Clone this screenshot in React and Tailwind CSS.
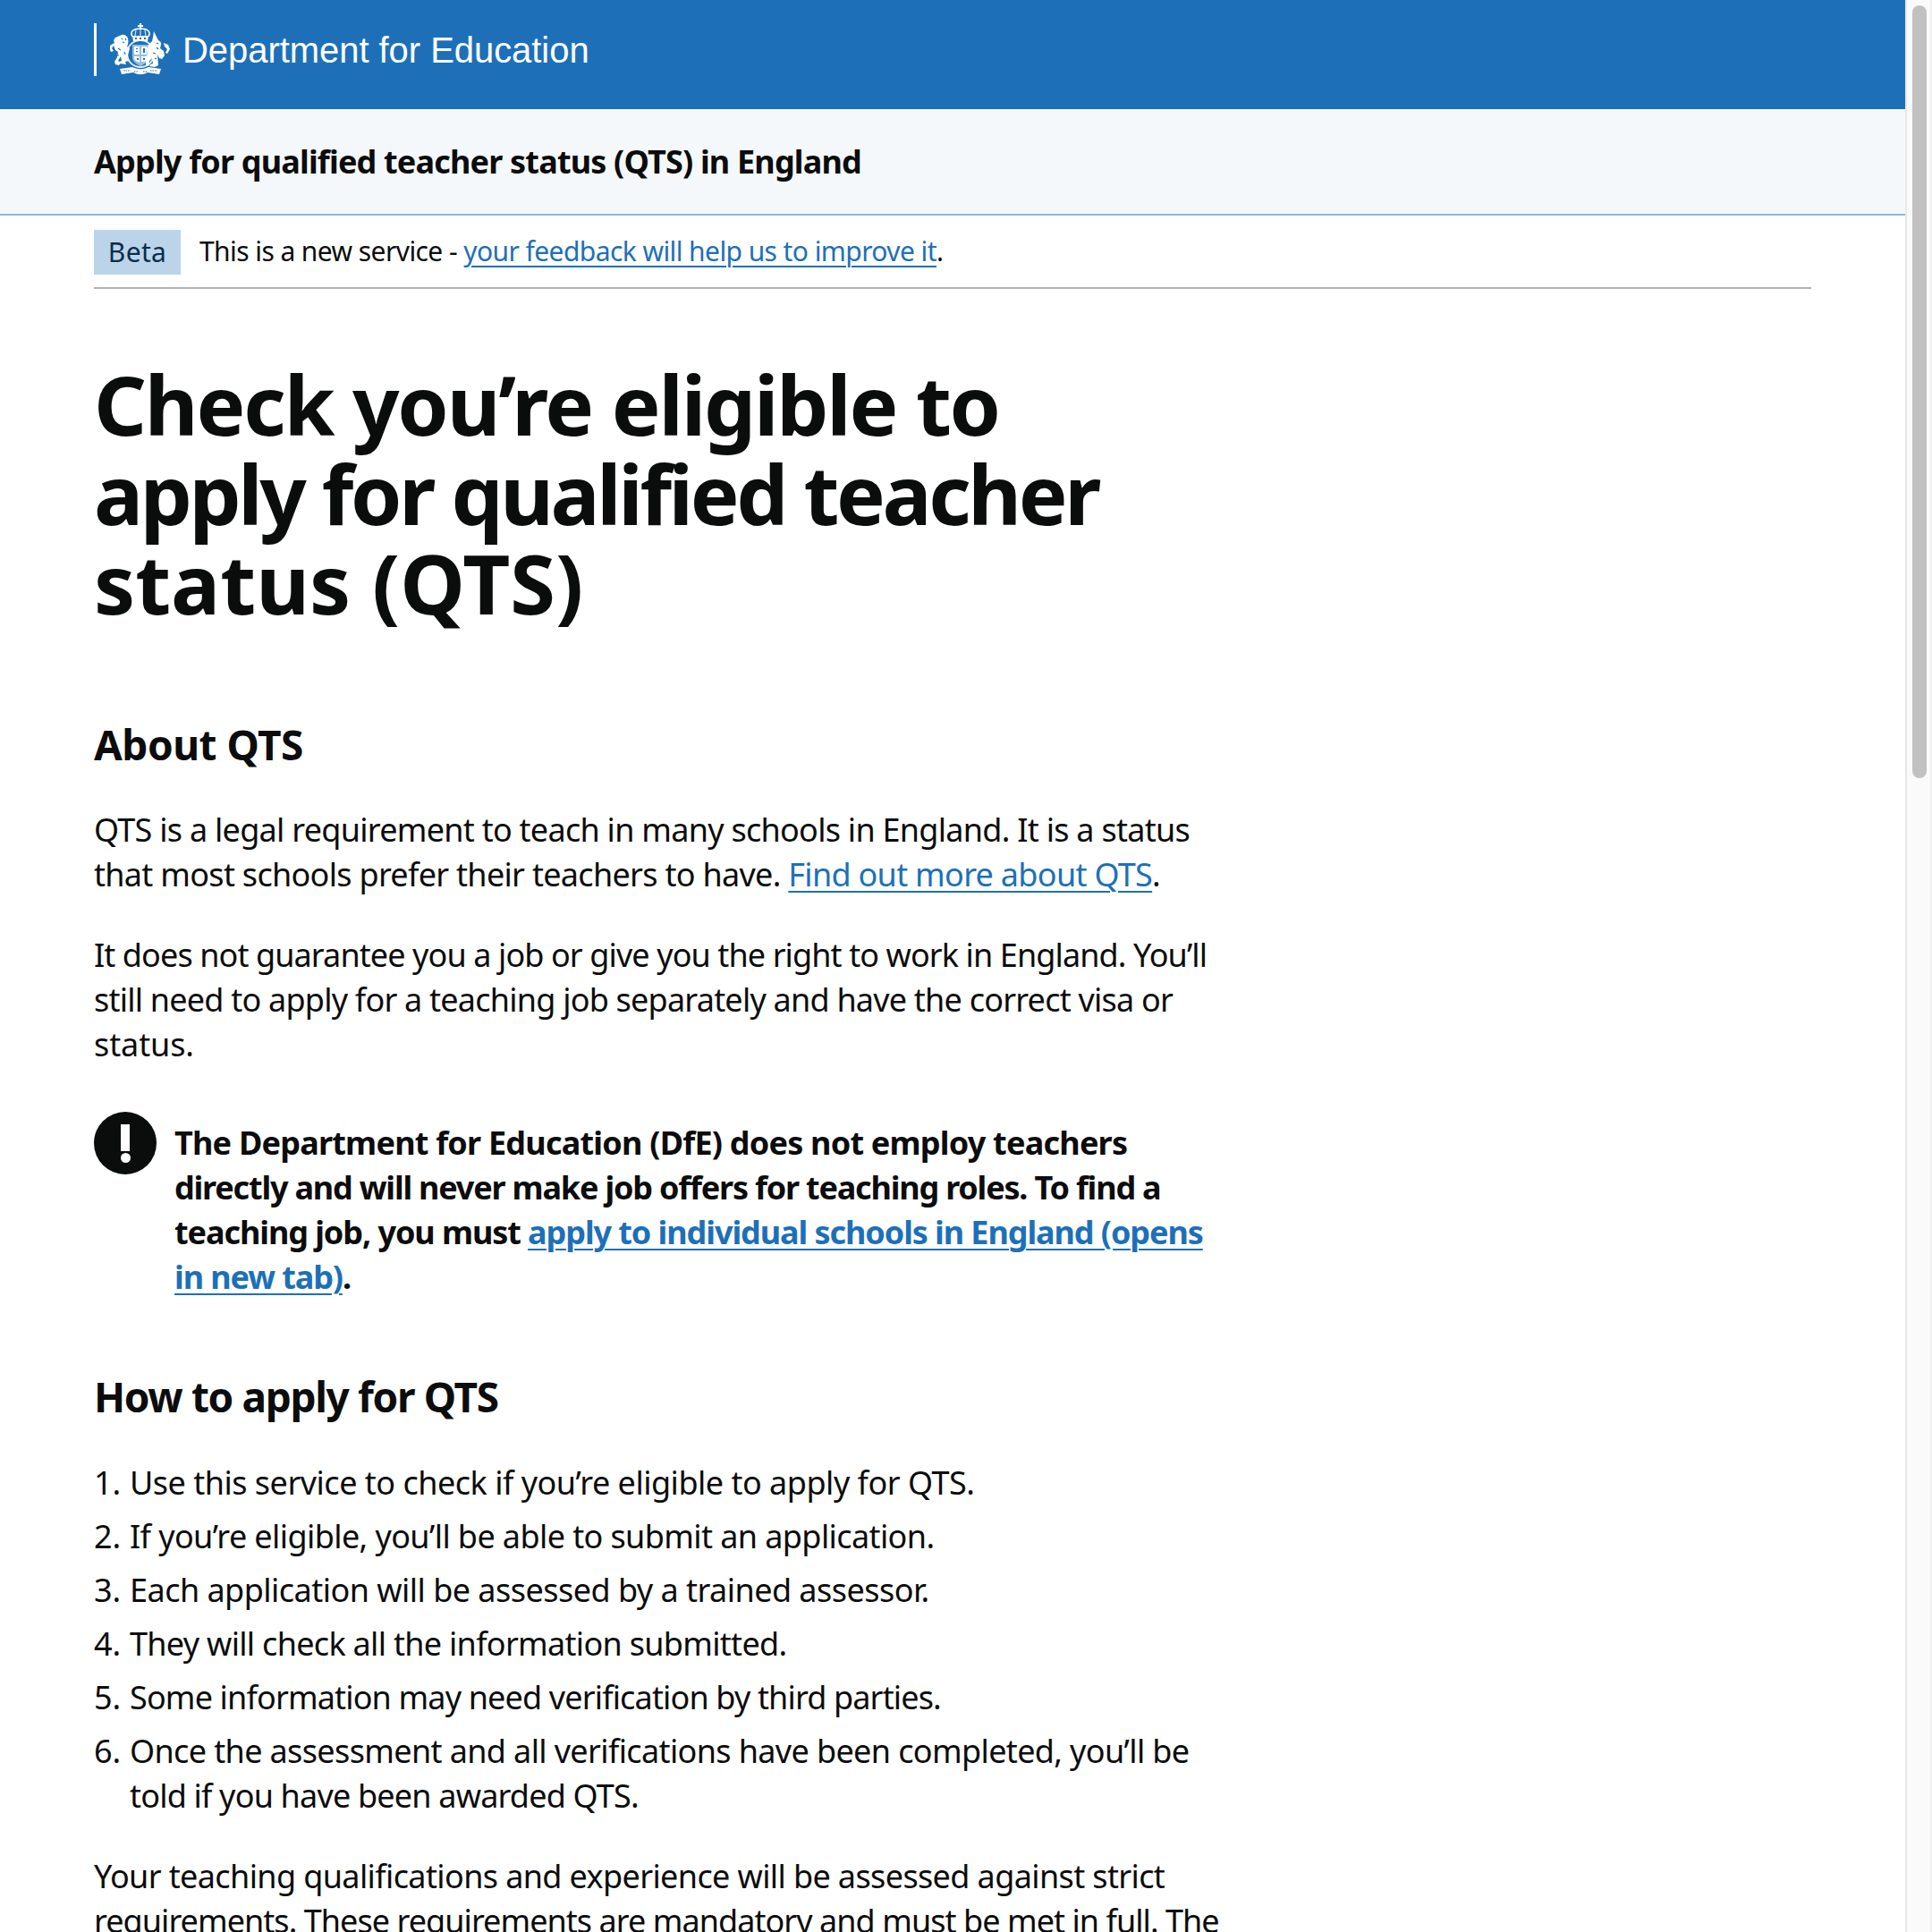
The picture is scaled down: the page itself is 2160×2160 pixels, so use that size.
const font = "font-['Noto_Sans',sans-serif]";

function Crest() {
  return (
    <svg width="68" height="60" viewBox="8 6 68 60" className="shrink-0">
      {/* crown */}
      <path d="M41 6h2v2h2v2h-2v3h-2v-3h-2V8h2z" fill="white" />
      <path d="M33 21c-3-6 1-9 9-9s12 3 9 9" fill="none" stroke="white" strokeWidth="1.6" />
      <path d="M42 12v9M37 13l-1 8M47 13l1 8" stroke="white" strokeWidth="1.2" opacity=".8" />
      <path d="M33 20h18l-1 6H34z" fill="white" />
      <path d="M36 22h2v2h-2zM41 22h2v2h-2zM46 22h2v2h-2z" fill="#1d70b8" />
      {/* garter and shield */}
      <circle cx="42" cy="40" r="15" fill="none" stroke="white" strokeWidth="2" opacity=".85" />
      <path d="M33 30h18v14c0 5-5 8-9 10-4-2-9-5-9-10z" fill="white" opacity=".55" />
      <path d="M35 32h6v9h-6zM43 43h6v3l-2 3h-4zM35 43h6v7l-4-2-2-2z" fill="white" />
      <path d="M43 32h6v9h-6z" fill="white" opacity=".9" />
      <path d="M37 34h2v1h-2zM37 37h2v1h-2zM45 34h2v5h-2zM38 45h2v2h-2zM45 45h2v2h-2z" fill="#1d70b8" />
      {/* lion */}
      <path d="M21 19c3-1 6 1 7 4 1 4 0 7-1 9l3 2-2 8 1 6-4 1 1 3-7-1-1-2 3-1-1-5-3 5 3 2-2 3-4-1-1-3 3-5 1-6-3-2-2-5-2 3 2 3-3 1-2-4 1-3 3-2 2-1-1-3 2-3z" fill="white" />
      <path d="M21 23l1 1M25 23l1 2M22 27l2 1M17 34l3 2M15 41l3 1M24 38l1 3" stroke="#1d70b8" strokeWidth="1.1" />
      {/* unicorn */}
      <path d="M57 15l5 10c2 1 4 3 3 5l-1 4 4 3 1 5-3 4-3-1-2-4 1 12-4 2-6-1 1-2 3-1-1-6-3 3-1 6-3-1 0-8 2-5-1-6 3-5 3-3 1-4z" fill="white" />
      <path d="M68 28l5 2 2 5-3 5-2-1 2-4-3-3z" fill="white" />
      <path d="M60 28l2 1M60 33l2 2M56 39l3 1M58 45l2 1" stroke="#1d70b8" strokeWidth="1.1" />
      {/* motto */}
      <path d="M19 57l14-2c6 3 12 3 18 0l14 2-2 6-13-2c-6 3-10 3-16 0l-13 2z" fill="white" />
      <path d="M23 59h8M35 60h4M45 60h4M53 59h8" stroke="#1d70b8" strokeWidth="1" strokeDasharray="1.5 1" />
    </svg>
  );
}

function A({ children }) {
  return <a href="#" className="text-[#1d70b8] underline decoration-[2px] underline-offset-[5px]">{children}</a>;
}

function L({ className, children }) {
  return <span className={`block whitespace-nowrap ${className}`}>{children}</span>;
}

export default function App() {
  return (
    <div className={`h-[2160px] w-[2160px] overflow-hidden flex bg-white text-[#0b0c0c] ${font}`}>
      <div className="flex-1 min-w-0">
        <header className="h-[122px] bg-[#1d70b8] px-[105px] pt-[26px]">
          <div className="flex items-start">
            <div className="w-[3px] h-[59px] bg-white" />
            <div className="ml-[15px]"><Crest /></div>
            <span className="ml-[13px] font-['Liberation_Sans',sans-serif] text-[40px] leading-[61px] tracking-[-0.05px] text-white">Department for Education</span>
          </div>
        </header>
        <div className="h-[119px] bg-[#f4f8fb] border-b-2 border-[#8fb8db] px-[105px] flex items-center">
          <span className="text-[36px] font-bold leading-[50px] tracking-[-0.82px]">Apply for qualified teacher status (QTS) in England</span>
        </div>
        <div className="mx-[105px] h-[82px] border-b-2 border-[#b1b4b6] pt-[16px] flex items-start">
          <span className="h-[50px] w-[97px] bg-[#bbd4ea] text-[#0c2d4a] text-[30px] leading-[49px] tracking-[0.3px] text-center">Beta</span>
          <span className="ml-[21px] text-[30px] leading-[48px] tracking-[-0.58px]">This is a new service - <A>your feedback will help us to improve it</A>.</span>
        </div>
        <main className="mx-[105px] w-[1300px] pt-[79px]">
          <h1 className="text-[92px] leading-[100px] font-bold mb-[100px]">
            <L className="tracking-[-2.2px]">Check you’re eligible to</L>
            <L className="tracking-[-3.4px]">apply for qualified teacher</L>
            <L className="tracking-[0px]">status (QTS)</L>
          </h1>
          <h2 className="text-[46px] leading-[60px] font-bold tracking-[-0.5px] mb-[41px]">About QTS</h2>
          <div className="text-[36px] leading-[50px]">
            <p className="mb-[40px]">
              <L className="tracking-[-0.73px]">QTS is a legal requirement to teach in many schools in England. It is a status</L>
              <L className="tracking-[-0.7px]">that most schools prefer their teachers to have. <A>Find out more about QTS</A>.</L>
            </p>
            <p className="mb-[51px]">
              <L className="tracking-[-0.9px]">It does not guarantee you a job or give you the right to work in England. You’ll</L>
              <L className="tracking-[-0.78px]">still need to apply for a teaching job separately and have the correct visa or</L>
              <L className="tracking-[-0.1px]">status.</L>
            </p>
          </div>
          <div className="flex mb-[78px]">
            <div className="w-[70px] h-[70px] rounded-full bg-[#0b0c0c] shrink-0 mt-[-1px] flex flex-col items-center pt-[14px]">
              <div className="w-[10px] h-[30px] bg-white" />
              <div className="w-[11px] h-[11px] rounded-full bg-white mt-[2px]" />
            </div>
            <p className="ml-[20px] pt-[9px] text-[36px] leading-[50px] font-bold">
              <L className="tracking-[-0.78px]">The Department for Education (DfE) does not employ teachers</L>
              <L className="tracking-[-1.2px]">directly and will never make job offers for teaching roles. To find a</L>
              <L className="tracking-[-1.08px]">teaching job, you must <A>apply to individual schools in England (opens</A></L>
              <L className="tracking-[-1.1px]"><A>in new tab)</A>.</L>
            </p>
          </div>
          <h2 className="text-[46px] leading-[60px] font-bold tracking-[-1.35px] mb-[42px]">How to apply for QTS</h2>
          <ol className="text-[36px] leading-[50px] mb-[40px]">
            {[
              ["1.", "Use this service to check if you’re eligible to apply for QTS.", "tracking-[-0.5px]"],
              ["2.", "If you’re eligible, you’ll be able to submit an application.", "tracking-[-0.6px]"],
              ["3.", "Each application will be assessed by a trained assessor.", "tracking-[-0.53px]"],
              ["4.", "They will check all the information submitted.", "tracking-[-0.7px]"],
              ["5.", "Some information may need verification by third parties.", "tracking-[-0.85px]"],
            ].map(([n, t, c]) => (
              <li key={n} className="flex mb-[10px]"><span className="w-[40px] shrink-0">{n}</span><span className={c}>{t}</span></li>
            ))}
            <li className="flex">
              <span className="w-[40px] shrink-0">6.</span>
              <span>
                <L className="tracking-[-0.63px]">Once the assessment and all verifications have been completed, you’ll be</L>
                <L className="tracking-[-0.81px]">told if you have been awarded QTS.</L>
              </span>
            </li>
          </ol>
          <p className="text-[36px] leading-[50px]">
            <L className="tracking-[-0.62px]">Your teaching qualifications and experience will be assessed against strict</L>
            <L className="tracking-[-0.95px]">requirements. These requirements are mandatory and must be met in full. The</L>
          </p>
        </main>
      </div>
      <div className="w-[30px] shrink-0 bg-[#fafafa] border-l-2 border-r-2 border-l-[#e8e8e8] border-r-[#f0f0f0] pt-[6px] pl-[6px]">
        <div className="w-[16px] h-[864px] rounded-full bg-[#c1c1c1]" />
      </div>
    </div>
  );
}
